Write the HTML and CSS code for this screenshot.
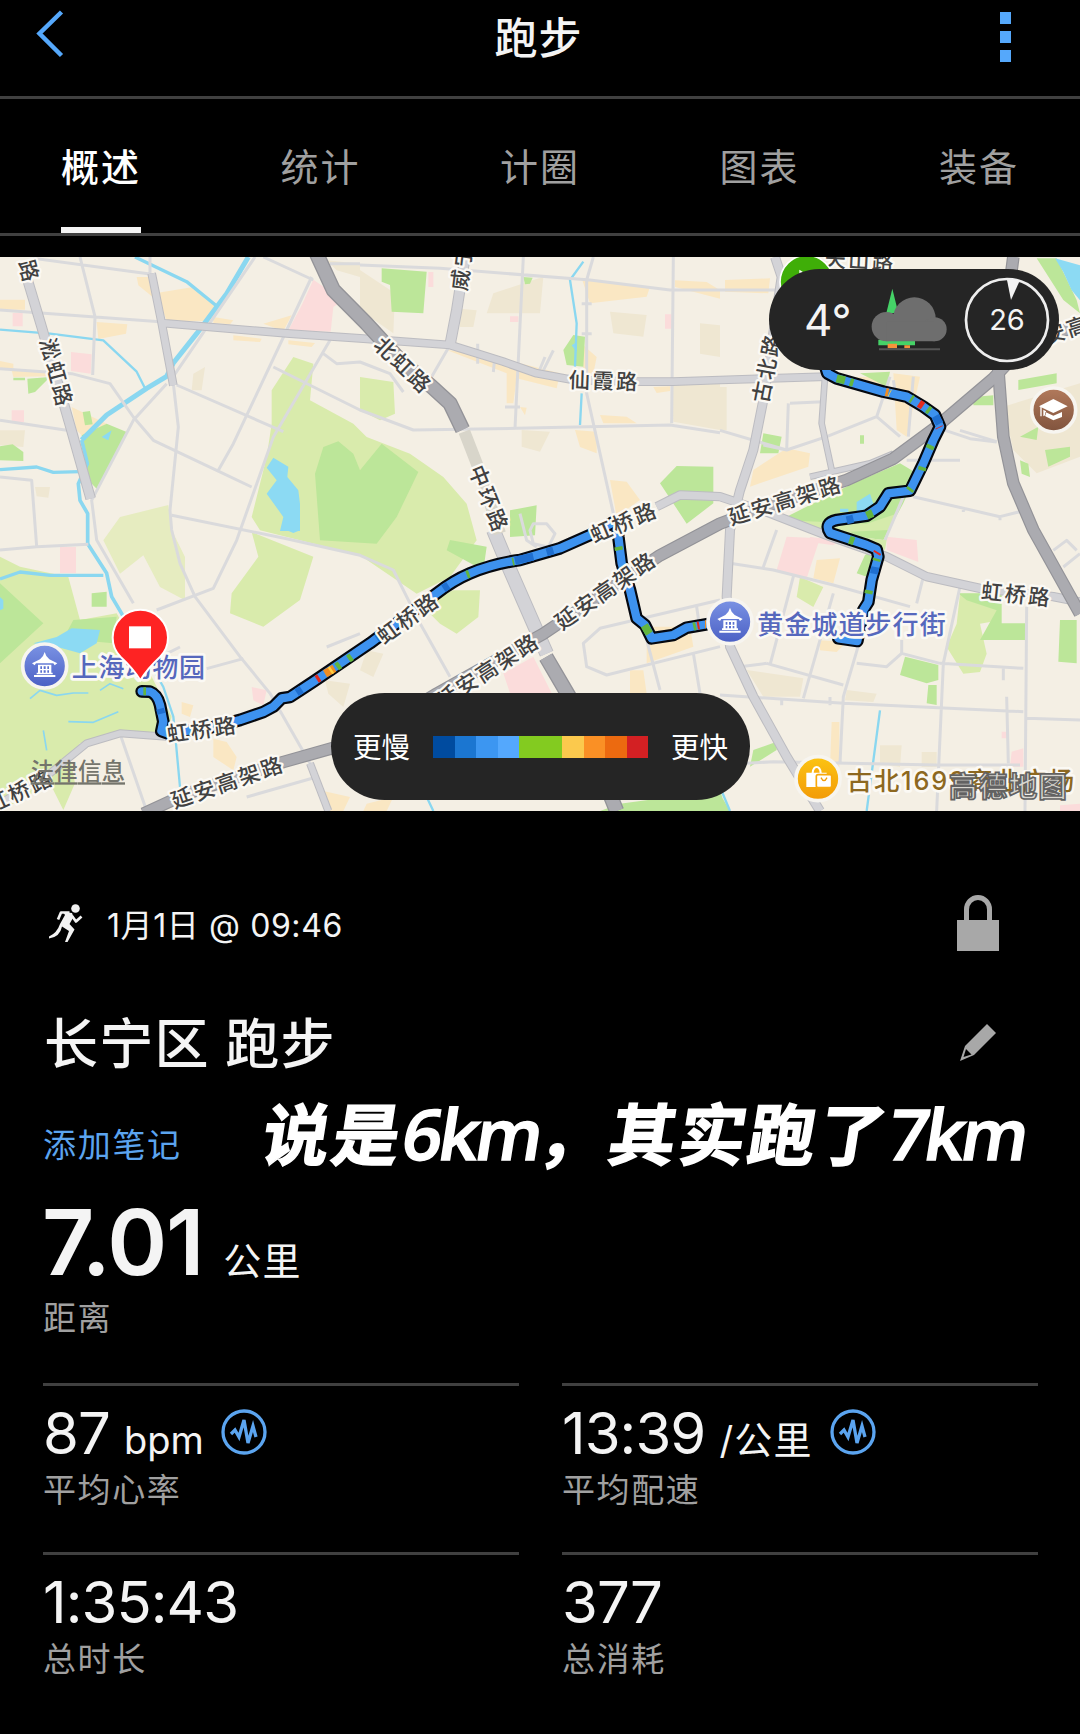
FILE: index.html
```html
<!DOCTYPE html>
<html lang="zh-CN">
<head>
    <meta charset="UTF-8">
    <meta name="viewport" content="width=device-width, initial-scale=1.0">
    <title>跑步</title>
    <link rel="stylesheet" href="styles.css">
</head>
<body>
    <header class="topbar">
        <svg class="back" width="28" height="48" viewBox="0 0 28 48"><path d="M25.500 2 3.500 23.500 25.500 45.500"/></svg>
        <h1>跑步</h1>
        <div class="more"><i></i><i></i><i></i></div>
    </header>

    <nav class="tabs">
        <a class="tab active">概述</a>
        <a class="tab">统计</a>
        <a class="tab">计圈</a>
        <a class="tab">图表</a>
        <a class="tab">装备</a>
    </nav>

    <section class="map">
        <svg class="map-canvas" width="1080" height="554" viewBox="0 0 3240 1662">
            <defs>
                <linearGradient id="blue" x1="0" y1="0" x2="0" y2="1"><stop offset="0" stop-color="#7b93e4"/><stop offset="1" stop-color="#4a5fc4"/></linearGradient>
                <linearGradient id="gold" x1="0" y1="0" x2="0" y2="1"><stop offset="0" stop-color="#fcc413"/><stop offset="1" stop-color="#f29a08"/></linearGradient>
                <linearGradient id="brown" x1="0" y1="0" x2="0" y2="1"><stop offset="0" stop-color="#b27a5c"/><stop offset="1" stop-color="#80533d"/></linearGradient>
                <g id="pavilion">
                    <path d="M0-42-5-30-14-20-38-8-30-2-26-8H26L30-2 38-8 14-20 5-30ZM-20-4H20V20H-20ZM-24 20H24V25H-24ZM-32 27H32V33H-32Z" fill="#fff"/>
                    <path d="M-13 1H-8V9H-13ZM-3 1H3V9H-3ZM8 1H13V9H8ZM-13 13H-8V20H-13ZM-3 13H3V20H-3ZM8 13H13V20H8Z" fill="#5a70cf"/>
                </g>
            </defs>
            <rect width="3240" height="1662" fill="#f4efe4"/>

            <!-- blocks -->
            <g fill="#efe7d2">
                <path d="M1080 39 1185 109 1180 229 1080 159ZM980 10 1080 20V60L1010 40ZM2015 384 2160 379V519L2020 494ZM1830 164 1940 174 1930 239 1840 229ZM1480 109 1630 59 1620 169 1460 169ZM1565 519 1650 524 1620 584 1565 569ZM2100 199 2160 205V300L2100 290ZM2160 390 2180 390V520H2160ZM1380 155 1430 160 1420 210 1380 210Z"/>
                <path d="M3010 449 3240 379V599L3110 649 3040 579ZM2240 1239 2410 1264 2400 1319 2290 1319ZM2540 1299 2630 1310 2620 1335 2535 1330ZM2640 1465 2705 1465 2700 1530 2640 1520ZM2765 1485H2810V1530H2765ZM580 350 615 330 605 400 575 400ZM105 690 150 690 145 722 110 718ZM0 520 75 520 70 570 0 565ZM975 1270 1050 1280 1030 1350 985 1310ZM1100 1180 1150 1190 1120 1260 1080 1240Z"/>
            </g>
            <g fill="#fae7c3">
                <path d="M0 128H75V158H0ZM290 195 382 202 378 230 295 246ZM470 108 580 90 650 140 640 192 500 192ZM410 60 445 60 458 120 415 85ZM640 180 700 190 690 202 640 198ZM790 200 875 175 850 222ZM700 235 785 245 780 255 700 250ZM865 250 945 258 935 270 865 262ZM0 312 40 320V336H0ZM35 340 145 345V358L40 360ZM215 450 320 500 250 540 230 520Z"/>
                <path d="M1745 64 1950 89 1940 119 1770 139ZM1340 279 1430 289 1520 309 1680 349 1670 394 1550 364 1540 439 1520 439 1520 349ZM1745 260 1790 300 1780 350 1750 345ZM1800 474 1880 479 1910 499 1810 499ZM1725 519 1790 524 1790 589 1740 570ZM1830 669 1880 674 1920 729 1850 779ZM2025 70 2120 75 2160 100V125L2025 90ZM1960 390 2010 388V402L1970 408ZM1560 450 1580 452 1575 475Z"/>
                <path d="M2175 69 2310 64 2305 109 2175 104ZM2260 639 2360 574 2430 589 2425 629 2250 689ZM2680 349 2760 359 2720 539 2690 519ZM2560 360 2660 359 2640 410 2560 395ZM2450 909 2520 904 2500 979 2440 964ZM1940 1109 2070 1109 2080 1169 1940 1219ZM2460 1150 2540 1155 2510 1185 2460 1180ZM2495 1395H2518V1530H2490ZM545 1335 580 1345 570 1380 545 1370ZM640 1445 680 1455 710 1500 700 1540 640 1500ZM960 1600 1050 1620 1030 1662 990 1662ZM1100 1640 1180 1620 1160 1662 1090 1662ZM1890 1240 1930 1240 1940 1310 1890 1310Z"/>
            </g>
            <g fill="#fbdcdb">
                <path d="M38 168H68V208H38ZM35 460H72V495H35ZM213 285 275 292 272 350 213 342ZM940 68 1030 130 1000 150 992 224 865 220 905 145ZM1285 45H1300V90H1285ZM1530 178H1555V195H1530ZM1995 172H2015V215H1995ZM180 870H228V948H180ZM755 1290 800 1300 790 1345 760 1330Z"/>
                <path d="M1510 1249 1600 1199 1655 1309H1530ZM2360 839 2460 844 2420 964 2330 939ZM2660 839 2750 849 2755 915 2660 879ZM3035 1484 3070 1474V1529H3030ZM3005 1424H3020V1444H3005ZM2430 840 2520 850 2500 865 2430 855ZM3180 1645 3240 1640V1662H3180Z"/>
            </g>
            <g fill="#d9ebac">
                <path d="M815 400 880 300 940 320 930 430 1060 500 1100 540 1230 590 1330 660 1400 740 1430 850 1350 960 1250 1010 1080 895 780 820 755 780 800 600 815 500Z"/>
                <path d="M755 825 940 899 900 1029 790 1109 690 1069 695 1009 775 899Z"/>
                <path d="M0 899 60 929 205 960 240 1089 350 1069 440 1229 515 1379 500 1429 360 1424 240 1459 210 1499 225 1579 190 1659 150 1579 0 1662Z"/>
                <path d="M1080 360 1180 375 1185 470 1140 490 1080 460ZM1260 1040 1360 1000 1440 1000 1435 1080 1370 1130 1320 1100ZM2400 960 2470 990 2440 1050 2390 1020ZM2880 1010 3000 1010 3000 1090 2940 1100 2960 1190 2940 1245 2890 1250 2840 1170 2870 1100Z"/>
            </g>
            <path d="M310 850 360 780 505 744 515 819 555 900 555 1030 480 990 430 895 360 950Z" fill="#e6ecc0"/>
            <g fill="#bce699">
                <path d="M245 535 320 500 380 525 290 695 265 670ZM248 465 270 462 278 502 255 505ZM0 568 38 562 70 585 70 612 0 610ZM82 365 150 360 105 405 85 410ZM40 362 75 362V370H40ZM1145 34 1280 44 1270 169 1175 164 1170 84 1145 74ZM1570 60 1598 62 1590 80 1575 82ZM1690 279 1720 234 1755 239 1750 329 1700 324Z"/>
                <path d="M970 570 1015 553 1060 590 1080 640 1145 560 1255 645 1190 780 1130 860 960 850 945 650Z"/>
                <path d="M1980 679 2030 627 2140 629 2140 739 2060 800ZM1350 849 1460 869 1450 940 1340 880ZM1530 760 1610 745 1605 835 1530 840ZM0 979 130 1099 0 1219ZM220 1089 350 1079 340 1159 190 1145ZM275 1009 320 1004 320 1049 275 1049Z"/>
                <path d="M2700 619 2750 649 2710 739 2650 849 2490 829 2360 779 2560 679ZM2580 349 2670 344 2660 389ZM2290 529 2345 539 2335 589 2280 589ZM2595 894 2620 880 2600 959 2570 949ZM2920 420 2980 415 2980 445 2920 445ZM2580 535H2592V560H2580Z"/>
                <path d="M3110 4H3170L3230 129 3240 169 3190 129ZM3055 369 3170 349V379L3055 399ZM3135 579 3210 569V599L3145 629ZM3060 539 3115 509 3110 549ZM3120 469 3180 474 3170 509 3120 500ZM3060 610 3085 620 3090 660 3065 650ZM2875 1009 3005 1009V1099L3075 1099V1149H2940L2990 1060 2900 1030Z"/>
                <path d="M2715 1199 2815 1224V1269L2780 1279 2700 1254ZM2785 1284H2810V1344L2780 1339ZM3180 1089H3230V1219L3175 1214ZM2260 1479 2330 1454V1479L2250 1529ZM2100 1640 2190 1662H2050ZM1860 1640 2160 1600 2180 1662 1800 1662ZM2160 1610 2190 1662H2160Z"/>
            </g>
            <path d="M2350 790 2490 829 2650 849 2690 770 2600 800ZM2550 824 2665 819 2655 879Z" fill="#d5ebab"/>

            <!-- water -->
            <g fill="#8cdaf3">
                <path d="M820 602 865 629 862 660 895 700 900 740 900 822 840 822 850 780 800 710 830 670 800 632ZM215 1114 300 1119 290 1159 240 1189 170 1169 100 1159 170 1140ZM305 540 335 520 325 550ZM2570 735 2610 710 2630 770 2570 775ZM2520 755H2545V765H2520ZM3165 4 3240 25V130L3215 100 3190 45ZM0 1020 10 1030V1055L0 1060ZM850 815 900 820 880 828ZM1715 265 1730 255V285Z"/>
            </g>
            <g class="water">
                <path stroke-width="15" d="M745 0 680 110 650 150 590 230 520 318 500 358 440 394 320 474 245 549"/>
                <path stroke-width="11" d="M245 549 262 620 235 680 240 730 263 770V860L320 949 335 1019 400 1129"/>
                <path stroke-width="7" d="M400 1129 490 1290 520 1379 528 1460 540 1590"/>
                <path stroke-width="10" d="M405 0 560 74 650 147M0 638 110 630 160 646 240 644M0 966 60 945 150 955 310 955"/>
                <path stroke-width="7" d="M0 218 150 230 310 250 410 344 435 394M1750 14 1710 69 1730 199 1725 329M1745 409 1740 504M2640 1360 2600 1662M1280 1620 1300 1662M2160 1590 2190 1662"/>
                <path stroke-width="5" d="M90 1325 120 1300 170 1315 220 1308 265 1308M205 1394 280 1396 355 1364M130 1420 140 1480M300 1300 330 1280 370 1295"/>
            </g>

            <!-- side streets -->
            <g class="street">
                <path d="M0 159 480 194M240 0 285 179 278 354M0 335 215 350 330 380 400 480 460 550 650 640 755 690M530 384 850 524M100 4 450 51V0M520 380 535 510 510 760 515 819 540 919 585 1019 720 1199 810 1309 930 1519 985 1662"/>
                <path d="M990 20H1080M935 60 700 560 655 640M990 250 820 540 710 850 640 994 470 1059M820 330 1080 459 1240 519 1550 514 2010 504 2160 527M500 380 400 490 275 730 290 849 400 1039M0 490 200 520M0 660 95 670 110 869 0 879M110 869 265 862M765 0 520 358M515 775 860 845 1080 895 1180 939 1260 1099 1350 1259M790 0 940 69M970 290 1010 320 1080 315 1170 350 1210 405"/>
                <path d="M1080 24 1320 34 1770 69 2010 99 2350 99M1570 0 1545 514M1780 0 1760 69 1760 409 1840 769M2020 0 2015 499M1350 264 1295 359M1433 260V320M1485 295 1480 345M1635 300 1610 360M1515 450H1560M1745 140H1775M1745 230H1775M2880 520 2990 554M540 1170 460 1210M620 1235 730 1205M360 1430 440 1662M740 1620 950 1560M1660 280 1630 340"/>
                <path d="M2370 439 2470 434M2365 439 2360 579 2290 564M2630 479 2480 539 2360 579 2160 520M2670 359 2630 479 2700 539M2740 359 2725 539M2820 515 2910 545 2990 555M2740 719 3000 779 3080 759M2710 719 2655 849M2720 610H2880M3000 779V790M2890 750V765M2680 370 2690 430M2320 300 2330 345"/>
                <path d="M2160 1314 2530 1339 3070 1364M2880 989 2830 1219 2810 1662M3080 1049 3075 1662M2820 1219 3070 1234M2380 959 2310 1224M2500 1009 2410 1324M2580 1149 2530 1319 2520 1519M2300 1219 2530 1284M2240 1519 2320 1514 2810 1524 3060 1524M2220 1229 2300 1219M2190 919 2320 939 2500 984 2730 1049M2770 959 2750 1039M2570 1219 2660 1229 2705 1189V1149M2705 1189 2820 1219M3080 1384 3240 1389M3020 1319 3025 1519M2330 819 2290 930M3160 880 3200 850 3230 880M3190 930 3240 890M3010 1230V1270M2345 1325V1345M2490 1320V1345"/>
                <path d="M2160 1029 1800 1114 1750 1159 1760 1229 1820 1254 2160 1169M2090 1049 2100 1119M1940 1149 1980 1299M2080 1189 2100 1309M1600 800 1640 800 1665 830 1645 870 1600 860 1590 820ZM1560 770 1580 850 1610 870M980 1170 1080 1130"/>
            </g>

            <!-- main roads -->
            <g class="road edge"><path d="M80 60 125 210 210 505 272 725" stroke-width="32"/><path d="M455 49 485 198 520 385M485 198 870 230 1080 244 1350 264 1510 314 1610 349 1720 369 1920 374 2020 374 2160 369 2480 359" stroke-width="26"/><path d="M1395 0 1370 160 1350 264" stroke-width="34"/><path d="M0 1639 150 1549 260 1459 360 1429 500 1439" stroke-width="24"/><path d="M1970 749 2040 714 2160 719 2310 769 2490 839 2660 899 2780 959 2940 994 3160 1019 3240 1035" stroke-width="28"/><path d="M2325 0 2345 60 2290 429 2260 579 2220 700 2190 819 2180 1019 2190 1169 2260 1319 2360 1499 2460 1662" stroke-width="30"/><path d="M2475 359 2465 499 2495 639M2430 659 2610 619 2680 590" stroke-width="20"/><path d="M1480 819 1530 939 1600 1099 1640 1190" stroke-width="44"/><path d="M930 1519 985 1662" stroke-width="24"/></g>
            <g class="road fill"><path d="M80 60 125 210 210 505 272 725" stroke-width="26"/><path d="M455 49 485 198 520 385M485 198 870 230 1080 244 1350 264 1510 314 1610 349 1720 369 1920 374 2020 374 2160 369 2480 359" stroke-width="20"/><path d="M1395 0 1370 160 1350 264" stroke-width="28"/><path d="M0 1639 150 1549 260 1459 360 1429 500 1439" stroke-width="18"/><path d="M1970 749 2040 714 2160 719 2310 769 2490 839 2660 899 2780 959 2940 994 3160 1019 3240 1035" stroke-width="22"/><path d="M2325 0 2345 60 2290 429 2260 579 2220 700 2190 819 2180 1019 2190 1169 2260 1319 2360 1499 2460 1662" stroke-width="24"/><path d="M2475 359 2465 499 2495 639M2430 659 2610 619 2680 590" stroke-width="14"/><path d="M1480 819 1530 939 1600 1099 1640 1190" stroke-width="38"/><path d="M930 1519 985 1662" stroke-width="18"/></g>
            <path d="M1393 524 1430 619 1500 829" fill="none" stroke="#d8d5ca" stroke-width="36"/>
            <g class="highway edge"><path d="M945-20 1000 99 1100 200 1200 309 1295 389 1350 439 1388 518M1638 1200 1720 1340 1850 1662" stroke-width="46"/><path d="M430 1670 560 1610 850 1515 1080 1450 1310 1310 1630 1130 1980 895 2160 800 2320 740 2540 669 2680 605 2810 509 2980 364 3060 279 3240 200" stroke-width="38"/><path d="M3040 0 2995 339 3010 539 3040 679 3100 819 3240 1070" stroke-width="38"/></g>
            <g class="highway fill"><path d="M945-20 1000 99 1100 200 1200 309 1295 389 1350 439 1388 518M1638 1200 1720 1340 1850 1662" stroke-width="38"/><path d="M430 1670 560 1610 850 1515 1080 1450 1310 1310 1630 1130 1980 895 2160 800 2320 740 2540 669 2680 605 2810 509 2980 364 3060 279 3240 200" stroke-width="31"/><path d="M3040 0 2995 339 3010 539 3040 679 3100 819 3240 1070" stroke-width="31"/></g>

            <!-- track -->
            <g class="track">
                <path id="route" d="M425 1303 450 1304Q472 1312 480 1344L490 1394 484 1422 505 1430 640 1410 720 1389 790 1365 820 1349 845 1324 870 1320 940 1274 1080 1179 1110 1159 1310 1009Q1360 970 1410 949 1480 920 1560 909L1680 874 1770 834 1850 790 1855 839 1865 919 1890 999 1910 1084 1935 1104 1955 1144 2020 1134 2060 1112 2125 1101M2515 1144 2572 1152 2590 1059 2605 1035 2615 969 2635 899 2630 877 2600 864 2490 828Q2470 798 2510 789L2600 776 2640 749 2665 709 2730 701 2770 619 2800 549 2820 509 2805 474 2770 449 2720 419 2650 404 2510 364 2482 349 2460 280"/>
                <use href="#route" class="track-inner"/>
                <path stroke="#1f6fd0" d="M1330 995 1345 985M1545 911 1600 899M1640 886 1660 880M2806 477 2819 500M890 1307 905 1297M1868 935 1872 955M480 1355 484 1370M1130 1145 1150 1130M2540 790 2560 785M2626 930 2622 950"/>
                <path stroke="#63b53f" d="M430 1303 438 1303M1400 953 1408 950M1537 914 1542 913M1010 1230 1020 1223M1045 1206 1055 1199M1855 869 1857 880M1933 1105 1948 1130M2080 1109 2088 1107M2548 848 2562 853M2605 1010 2607 1000M2629 912 2631 905M2600 776 2618 768M2733 694 2728 701M2510 364 2535 370M2550 375 2560 378M2732 424 2738 428M2782 456 2790 462M2768 630 2765 640M2793 565 2788 575"/>
                <path stroke="#ef8d22" d="M975 1250 1003 1234M2657 405 2665 407M2115 1102 2118 1102"/>
                <path stroke="#ffcf40" d="M990 1242 996 1238M2668 408 2670 409"/>
                <path stroke="#e32a1e" d="M950 1267 958 1262M2092 1106 2098 1105M2757 439 2769 447M2630 890 2633 885M2817 510 2818 512"/>
            </g>

            <!-- street names -->
            <g class="name">
                <text transform="translate(88 44) rotate(75)">路</text>
                <text transform="translate(170 348) rotate(75)">淞虹路</text>
                <text transform="translate(1210 325) rotate(44)">北虹路</text>
                <text transform="translate(1385 30) rotate(-83)">威宁</text>
                <text transform="translate(1813 371) rotate(2)">仙霞路</text>
                <text transform="translate(1467 726) rotate(68)">中环路</text>
                <text transform="translate(2300 332) rotate(-79)">古北路</text>
                <text transform="translate(2580 10) rotate(3)">天山路</text>
                <text transform="translate(3200 218) rotate(-18)">安高</text>
                <text transform="translate(2356 730) rotate(-17)">延安高架路</text>
                <text transform="translate(1872 795) rotate(-23)">虹桥路</text>
                <text transform="translate(1817 1000) rotate(-35)">延安高架路</text>
                <text transform="translate(1463 1240) rotate(-33)">延安高架路</text>
                <text transform="translate(1225 1082) rotate(-36)">虹桥路</text>
                <text transform="translate(607 1417) rotate(-8)">虹桥路</text>
                <text transform="translate(683 1575) rotate(-19)">延安高架路</text>
                <text transform="translate(60 1602) rotate(-25)">虹桥路</text>
                <text transform="translate(3050 1012) rotate(6)">虹桥路</text>
            </g>

            <!-- places -->
            <g class="place">
                <circle cx="134" cy="1227" r="66" fill="url(#blue)"/><use href="#pavilion" x="134" y="1227"/>
                <text x="215" y="1260" textLength="400">上海动物园</text>
                <circle cx="2190" cy="1094" r="66" fill="url(#blue)"/><use href="#pavilion" x="2190" y="1094"/>
                <text x="2272" y="1130" textLength="565">黄金城道步行街</text>
                <circle cx="2454" cy="1565" r="66" fill="url(#gold)"/>
                <path d="M2419 1547H2435Q2437 1527 2450 1527T2465 1547H2480V1590H2419Z" fill="#fff"/><path d="M2441 1547Q2443 1533 2450 1533T2459 1547Z" fill="#fbb10f"/>
                <rect x="2449" y="1553" width="46" height="39" rx="5" fill="#fff" stroke="#f8a90c" stroke-width="5"/><path d="M2463 1562Q2472 1580 2481 1562" fill="none" stroke="#f39c08" stroke-width="4"/>
                <text class="shop" x="2540" y="1598" textLength="682">古北1699商业广场</text>
                <circle cx="3161" cy="459" r="66" fill="url(#brown)"/>
                <path d="M3117 448 3160 426 3203 448 3160 468ZM3130 458V478L3138 473V463ZM3136 465 3160 476 3186 465V480L3160 490 3136 478Z" fill="#fff"/><path d="M3123 450V478" stroke="#fff" stroke-width="4"/>
            </g>
            <text class="legal" x="92" y="1570" textLength="283">法律信息</text>
            <text class="amap" x="2846" y="1620" textLength="355">高德地图</text>

            <circle cx="2420" cy="75" r="80" fill="#3fae08" stroke="#fff" stroke-width="5"/>
            <path d="M2398 38 2430 58 2398 78Z" fill="#fff"/>
            <path d="M421 1270Q400 1235 362 1200A83 83 0 1 1 480 1200Q442 1235 421 1270Z" fill="#fe2323" stroke="#fff" stroke-width="6"/>
            <rect x="387" y="1108" width="66" height="66" fill="#fff"/>
        </svg>

        <div class="weather">
            <span class="temp">4°</span>
            <svg width="76" height="64" viewBox="0 0 228 192">
                <path d="M64 2 82 75H46ZM22 155H132V172H22Z" fill="#45d267"/>
                <path d="M50 167H78V181H50ZM100 172H117V181H100Z" fill="#f7923a"/>
                <g fill="#6e6e6e"><circle cx="46" cy="116" r="44"/><circle cx="130" cy="92" r="64"/><circle cx="191" cy="124" r="36"/><path d="M46 100H191V160H46Z"/></g>
                <path d="M24 184H207" stroke="#555" stroke-width="6"/>
            </svg>
            <div class="wind">
                <svg width="86" height="86" viewBox="0 0 86 86"><circle cx="43" cy="43" r="41" fill="none" stroke="#eee" stroke-width="2.700"/><path d="M43 3H56L47 23Z" fill="#f4f4f4"/></svg>
                <span>26</span>
            </div>
        </div>

        <div class="legend">
            <span>更慢</span>
            <div class="scale"><i class="s1"></i><i class="s2"></i><i class="s3"></i><i class="s4"></i><i class="s5"></i><i class="s5"></i><i class="s6"></i><i class="s7"></i><i class="s8"></i><i class="s9"></i></div>
            <span>更快</span>
        </div>
    </section>

    <main class="details">
        <div class="row when">
            <svg width="36" height="38" viewBox="0 0 36 38">
                <circle cx="27.500" cy="4.500" r="4.300" fill="#f2f2f2"/>
                <path d="M10 15.500 13 8.500 21.500 8.500M24 12 28 17.500 33.500 12.500" fill="none" stroke="#f2f2f2" stroke-width="2.700" stroke-linejoin="round"/>
                <path d="M15 8 24 9 25.500 13 21.500 20 26.500 25.500 19.500 38H17L21 27 14 22.500Q12 33 1 34.500V32.500Q9 29 12 20L17 11Z" fill="#f2f2f2"/>
            </svg>
            <span class="date">1月1日 @ 09:46</span>
            <svg class="end lock" width="42" height="56" viewBox="0 0 42 56"><path d="M0 25H42V56H0Z" fill="#a8a8a8"/><path d="M9.500 27V14.500A11.500 12 0 0 1 32.500 14.500V27" fill="none" stroke="#a8a8a8" stroke-width="5"/></svg>
        </div>
        <div class="row heading">
            <h2>长宁区 跑步</h2>
            <svg class="end pencil" width="36" height="37" viewBox="0 0 36 37"><path d="M27 0 36 9 14 31 0 37 5 22Z" fill="#a8a8a8"/><path d="M6 25 11.500 30.500 3.500 33Z" fill="#000"/></svg>
        </div>
        <div class="row note">
            <a>添加笔记</a>
            <p class="caption">说是<b>6km</b>，其实跑了<b>7km</b></p>
        </div>
        <div class="distance">
            <div class="value"><strong>7.01</strong><span>公里</span></div>
            <div class="label">距离</div>
        </div>
        <div class="stats">
            <div class="stat">
                <div class="value"><strong>87</strong><span class="bpm">bpm</span>
                    <svg class="pulse" width="46" height="46" viewBox="0 0 46 46"><circle cx="23" cy="23" r="21"/><path d="M10 25 14 21 18 28 23 11 27 34 32 17 35 28"/></svg>
                </div>
                <div class="label">平均心率</div>
            </div>
            <div class="stat">
                <div class="value"><strong>13:39</strong><span>/公里</span>
                    <svg class="pulse" width="46" height="46" viewBox="0 0 46 46"><circle cx="23" cy="23" r="21"/><path d="M10 25 14 21 18 28 23 11 27 34 32 17 35 28"/></svg>
                </div>
                <div class="label">平均配速</div>
            </div>
            <div class="stat">
                <div class="value"><strong>1:35:43</strong></div>
                <div class="label">总时长</div>
            </div>
            <div class="stat">
                <div class="value"><strong>377</strong></div>
                <div class="label">总消耗</div>
            </div>
        </div>
    </main>
</body>
</html>
```
FILE: styles.css
```css
* {
    box-sizing: border-box;
}

body {
    margin: 0;
    width: 1080px;
    height: 1734px;
    overflow: hidden;
    background-color: #000;
    color: #f4f4f4;
    font-family: Inter, "Noto Sans CJK SC", sans-serif;
}

h1, h2, p {
    margin: 0;
}

.topbar {
    display: flex;
    justify-content: space-between;
    height: 99px;
    padding: 10px 69px 0 36px;
    border-bottom: 3px solid #404040;
}

.back path {
    fill: none;
    stroke: #55a8fb;
    stroke-width: 4.5;
}

.topbar h1 {
    margin: 5px 0 0 13px;
    font-size: 43px;
    line-height: 46px;
    font-weight: 500;
    letter-spacing: 1px;
}

.more {
    display: flex;
    flex-direction: column;
    gap: 7px;
    padding-top: 2px;
}

.more i {
    width: 11px;
    height: 12px;
    background-color: #55a8fb;
}

.tabs {
    display: flex;
    justify-content: space-between;
    height: 137px;
    padding: 0 61px;
    border-bottom: 3px solid #404040;
}

.tab {
    width: 80px;
    padding-top: 42px;
    font-size: 38px;
    line-height: 52px;
    letter-spacing: 2px;
    color: #a0a0a0;
    white-space: nowrap;
}

.tab.active {
    color: #fff;
    font-weight: 500;
    border-bottom: 6px solid #f4f4f4;
}

/* map */
.map {
    position: relative;
    height: 554px;
    margin-top: 21px;
    overflow: hidden;
}

.map-canvas {
    display: block;
}

.water {
    fill: none;
    stroke: #8ad7f0;
    stroke-linejoin: round;
}

.street {
    fill: none;
    stroke: #dadadc;
    stroke-width: 9;
    stroke-linejoin: round;
}

.road, .highway {
    fill: none;
    stroke-linejoin: round;
}

.road.edge {
    stroke: #bcbcc1;
}

.road.fill {
    stroke: #d3d3d7;
}

.highway.edge {
    stroke: #939398;
}

.highway.fill {
    stroke: #ababb0;
}

.track path {
    fill: none;
    stroke-width: 24;
    stroke-linejoin: round;
}

.track {
    stroke-width: 38;
    stroke: #05080f;
}

.track #route {
    stroke: inherit;
    stroke-width: inherit;
    stroke-linecap: round;
}

.track .track-inner {
    stroke: #3d92ef;
    stroke-width: 25;
}

.name text {
    font-size: 64px;
    letter-spacing: 7px;
    font-weight: 500;
    text-anchor: middle;
    dominant-baseline: central;
    fill: #414141;
    stroke: #fbf9f4;
    stroke-width: 14;
    stroke-linejoin: round;
    paint-order: stroke;
}

.place circle {
    stroke: #f7f5f0;
    stroke-width: 11;
}

.place text {
    font-size: 78px;
    font-weight: 500;
    fill: #5668bd;
    stroke: #fbf9f4;
    stroke-width: 16;
    stroke-linejoin: round;
    paint-order: stroke;
}

.place .shop {
    font-size: 76px;
    fill: #8d6820;
}

.legal {
    font-size: 70px;
    font-weight: 500;
    fill: #74746c;
    text-decoration: underline;
}

.amap {
    font-size: 86px;
    font-weight: 700;
    fill: #d9d7d0;
    stroke: #626262;
    stroke-width: 5;
}

.weather {
    position: absolute;
    top: 12px;
    left: 769px;
    display: flex;
    align-items: center;
    width: 290px;
    height: 101px;
    padding: 0 9px 0 35px;
    border-radius: 51px;
    background-color: #252525;
}

.temp {
    width: 67px;
    font-size: 44px;
}

.wind {
    position: relative;
    height: 86px;
    margin-left: auto;
}

.wind span {
    position: absolute;
    left: 0;
    width: 86px;
    line-height: 86px;
    text-align: center;
    font-size: 29px;
}

.legend {
    position: absolute;
    top: 436px;
    left: 331px;
    display: flex;
    align-items: center;
    justify-content: center;
    gap: 23px;
    width: 419px;
    height: 107px;
    border-radius: 54px;
    background-color: #252525;
    font-size: 28.5px;
    color: #fff;
}

.legend span {
    padding-bottom: 3px;
}

.scale {
    display: flex;
    width: 215px;
    height: 22px;
}

.scale i {
    flex: 1;
}

.s1 { background-color: #004b9f; }
.s2 { background-color: #1b76d1; }
.s3 { background-color: #3c96f1; }
.s4 { background-color: #54a8fd; }
.s5 { background-color: #83cb20; }
.s6 { background-color: #fbc94d; }
.s7 { background-color: #fa9025; }
.s8 { background-color: #ec6a10; }
.s9 { background-color: #d32023; }

/* details */
.details {
    padding: 84px 43px 0;
}

.row {
    display: flex;
    align-items: center;
}

.end {
    margin-left: auto;
}

.when {
    height: 56px;
    padding: 0 38px 0 5px;
}

.date {
    margin-left: 23px;
    font-size: 32px;
    letter-spacing: 0.6px;
}

.heading {
    height: 56px;
    margin-top: 63px;
    padding: 0 41px 0 1px;
}

.heading h2 {
    padding-bottom: 3px;
    font-size: 54px;
    font-weight: 500;
    letter-spacing: 1.2px;
    white-space: nowrap;
}

.note {
    position: relative;
    height: 60px;
    margin-top: 43px;
}

.note a {
    font-size: 33px;
    letter-spacing: 1.7px;
    color: #5ba4ef;
}

.caption {
    position: absolute;
    top: -32px;
    left: 221px;
    font-family: "Noto Sans CJK SC", sans-serif;
    font-size: 67px;
    line-height: 100px;
    font-weight: 700;
    letter-spacing: 2.8px;
    color: #fff;
    white-space: nowrap;
    transform: skewX(-9deg);
    -webkit-text-stroke: 1.5px #fff;
}

.caption b {
    font-family: "Open Sans", sans-serif;
    font-size: 70px;
    font-weight: 600;
    letter-spacing: -3.4px;
}

.value {
    display: flex;
    align-items: baseline;
    height: 60px;
}

.value strong {
    font-weight: 400;
    font-size: 58px;
    line-height: 60px;
    letter-spacing: -0.9px;
}

.value span {
    margin-left: 14px;
    font-size: 38px;
    line-height: 60px;
    letter-spacing: 1.2px;
}

.value .bpm {
    letter-spacing: 0;
}

.label {
    font-size: 33px;
    line-height: 40px;
    letter-spacing: 1.6px;
    color: #a0a0a0;
}

.distance {
    height: 210px;
    padding-top: 19px;
}

.distance .value {
    height: 100px;
}

.distance strong {
    font-size: 91px;
    line-height: 100px;
    font-weight: 600;
    letter-spacing: -1.2px;
    margin-left: -1px;
}

.distance .value span {
    margin-left: 20px;
}

.distance .label {
    margin-top: 6px;
}

.stats {
    display: grid;
    grid-template-columns: 476px 476px;
    gap: 0 43px;
}

.stat {
    height: 169px;
    padding-top: 17px;
    border-top: 3px solid #404040;
}

.stat .label {
    margin-top: 7px;
}

.pulse {
    align-self: flex-start;
    margin: 6px 0 0 17px;
    fill: none;
    stroke: #5ba4ef;
    stroke-width: 3.3;
}
```
